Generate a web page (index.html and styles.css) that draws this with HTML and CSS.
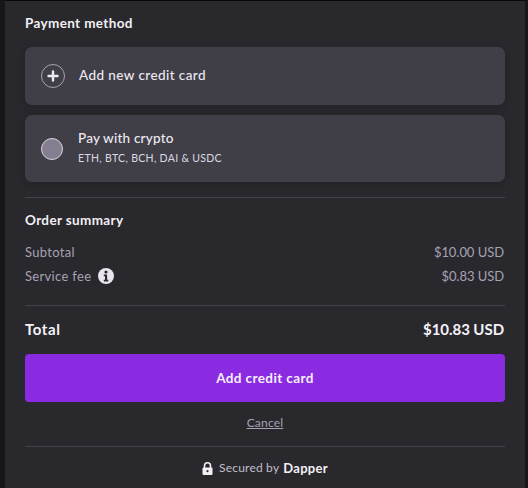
FILE: index.html
```html
<!DOCTYPE html>
<html lang="en">
<head>
<meta charset="utf-8">
<title>Payment</title>
<link rel="stylesheet" href="styles.css">
</head>
<body>
<main class="panel">
  <h2 class="heading first">Payment method</h2>
  <div class="option option-card">
    <span class="plus-ring">
      <svg viewBox="0 0 12 12" width="12" height="12"><path d="M6 1.5v9M1.5 6h9" stroke="#eeeaf2" stroke-width="2.4" stroke-linecap="round" fill="none"/></svg>
    </span>
    <span class="option-title wide">Add new credit card</span>
  </div>
  <div class="option option-crypto">
    <span class="radio"></span>
    <div class="crypto-text">
      <div class="option-title">Pay with crypto</div>
      <div class="option-sub">ETH, BTC, BCH, DAI &amp; USDC</div>
    </div>
  </div>
  <hr class="rule rule-a">
  <h2 class="heading">Order summary</h2>
  <div class="line line-first"><span>Subtotal</span><span class="amount">$10.00 USD</span></div>
  <div class="line line-second">
    <span class="fee">Service fee
      <svg class="info" viewBox="0 0 16 16" width="16" height="16"><circle cx="8" cy="8" r="8" fill="#e9e4ee"/><circle cx="8" cy="4" r="1.6" fill="#29282d"/><path d="M5.8 6.6h3.3v5.2h1.2v1.6H5.8v-1.6h1.2V8.2H5.8z" fill="#29282d"/></svg>
    </span>
    <span class="amount">$0.83 USD</span>
  </div>
  <hr class="rule rule-b">
  <div class="total"><span class="total-label">Total</span><span class="total-amount">$10.83 USD</span></div>
  <button class="cta" type="button">Add credit card</button>
  <div class="cancel-row"><a class="cancel" href="#">Cancel</a></div>
  <hr class="rule rule-c">
  <div class="secured">
    <svg viewBox="0 0 11 13" width="11" height="13"><path d="M2.5 6V3.8a3 3 0 0 1 6 0V6" stroke="#f2eff5" stroke-width="1.6" fill="none"/><rect x="0.5" y="5.5" width="10" height="7.5" rx="1" fill="#f2eff5"/><circle cx="5.5" cy="9.2" r="1.1" fill="#29282d"/></svg>
    <span>Secured by</span><strong class="brand">Dapper</strong>
  </div>
</main>
</body>
</html>
```
FILE: styles.css
```css
html, body { margin: 0; padding: 0; height: 100%; }
body {
  background: #17161a;
  font-family: "Lato", "Liberation Sans", sans-serif;
  color: #f2eff5;
  overflow: hidden;
}
.panel {
  box-sizing: border-box;
  height: 488px;
  margin: 0 3px 0 5px;
  padding: 14px 20px 0;
  background: #29282d;
  border-top: 1px solid #08080a;
}
.heading {
  margin: 0;
  font-size: 13.5px;
  line-height: 16px;
  font-weight: 700;
  letter-spacing: .36px;
  color: #f2eff5;
}
.first { margin-bottom: 16px; }
.option {
  display: flex;
  align-items: center;
  background: #403f48;
  border-radius: 7px;
  box-shadow: 0 2px 6px rgba(20, 20, 24, .25);
}
.option-card { height: 58px; padding-left: 16px; gap: 14px; margin-bottom: 10px; }
.option-crypto { height: 67px; padding-left: 16px; gap: 15px; }
.plus-ring {
  box-sizing: border-box;
  width: 24px;
  height: 24px;
  border: 1px solid #a8a4ae;
  border-radius: 50%;
  display: flex;
  align-items: center;
  justify-content: center;
}
.option-title {
  font-size: 13.5px;
  line-height: 18px;
  font-weight: 500;
  letter-spacing: .2px;
  color: #eeeaf2;
}
.wide { letter-spacing: .42px; margin-top: -2px; }
.radio {
  box-sizing: border-box;
  width: 22px;
  height: 22px;
  border-radius: 50%;
  background: #857e90;
  border: 1px solid #d8d4dc;
}
.crypto-text { margin-top: -3px; }
.option-sub {
  margin-top: 4px;
  font-size: 10.5px;
  line-height: 14px;
  letter-spacing: .32px;
  color: #dcd8e0;
}
.rule { margin: 0; border: 0; height: 1px; background: #434248; }
.rule-a { margin-top: 15px; margin-bottom: 14px; }
.rule-b { margin-top: 20px; }
.rule-c { margin-top: 15px; }
.line {
  display: flex;
  justify-content: space-between;
  align-items: center;
  font-size: 13px;
  line-height: 18px;
  letter-spacing: .32px;
  color: #a8a1b4;
}
.line-first { margin-top: 15px; }
.line-second { margin-top: 6px; }
.amount { letter-spacing: -.05px; padding-right: 1px; }
.fee { display: inline-flex; align-items: center; gap: 7px; }
.total {
  display: flex;
  justify-content: space-between;
  margin-top: 13px;
  font-size: 15px;
  line-height: 20px;
  font-weight: 700;
  color: #f5f2f8;
}
.total-label { letter-spacing: .6px; }
.total-amount { letter-spacing: -.05px; padding-right: 1px; }
.cta {
  display: block;
  width: 100%;
  height: 48px;
  margin-top: 15px;
  border: 0;
  border-radius: 4px;
  background: #8a2be2;
  color: #f5f0fa;
  font: 700 13.5px "Lato", "Liberation Sans", sans-serif;
  letter-spacing: .4px;
}
.cancel-row { margin-top: 11px; text-align: center; line-height: 16px; }
.cancel { font-size: 12px; color: #a8a1b4; text-decoration: underline; letter-spacing: .2px; }
.secured {
  display: flex;
  justify-content: center;
  align-items: center;
  gap: 6px;
  margin-top: 13px;
  font-size: 12px;
  line-height: 16px;
  letter-spacing: .2px;
  color: #c4bfca;
}
.brand { margin-left: -2px; font-size: 13px; color: #f2eff5; font-weight: 700; letter-spacing: .3px; }
```
